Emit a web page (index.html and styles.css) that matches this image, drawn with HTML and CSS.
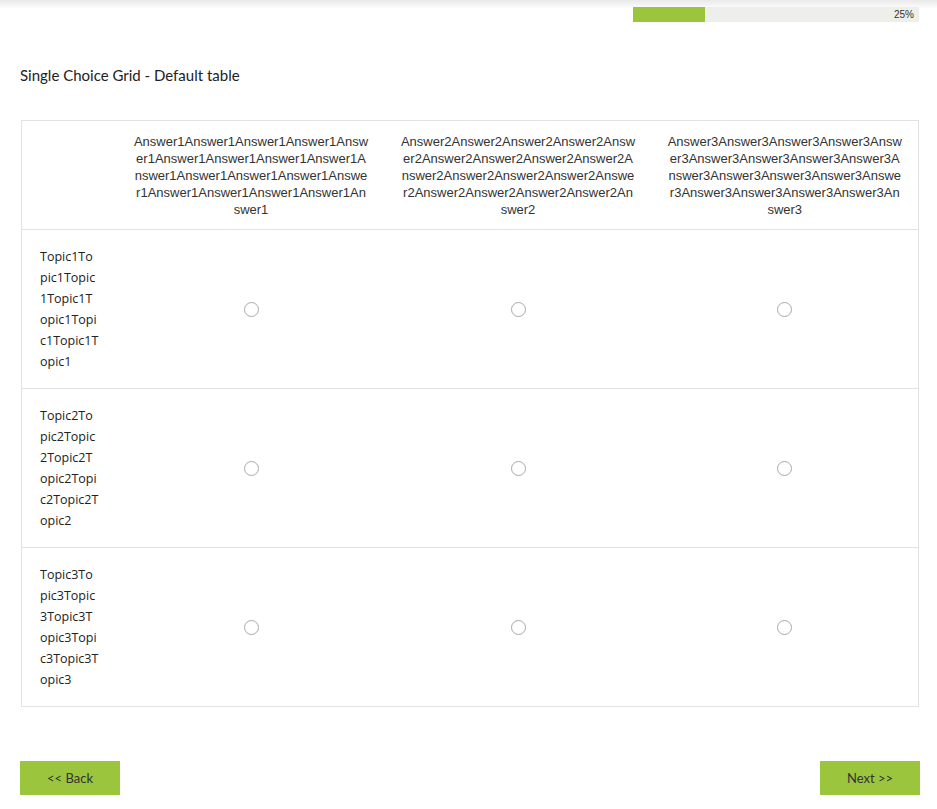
FILE: index.html
```html
<!doctype html>
<html lang="en">
  <head>
    <meta charset="UTF-8" />
    <meta name="viewport" content="width=device-width, initial-scale=1.0" />
    <title>Single Choice Grid</title>
    <link rel="stylesheet" href="styles.css">
  </head>
  <body>
    <div class="topbar">
      <div class="progress">
        <div class="progress-fill" style="width: 25%"></div>
        <span class="progress-text">25%</span>
      </div>
    </div>

    <div class="page">
      <h1 class="question-title">Single Choice Grid - Default table</h1>

      <table class="grid">
        <colgroup>
          <col class="topic-col">
          <col>
          <col>
          <col>
        </colgroup>
        <thead>
          <tr>
            <th></th>
            <th>Answer1Answer1Answer1Answer1Answer1Answer1Answer1Answer1Answer1Answer1Answer1Answer1Answer1Answer1Answer1Answer1Answer1Answer1Answer1</th>
            <th>Answer2Answer2Answer2Answer2Answer2Answer2Answer2Answer2Answer2Answer2Answer2Answer2Answer2Answer2Answer2Answer2Answer2Answer2Answer2</th>
            <th>Answer3Answer3Answer3Answer3Answer3Answer3Answer3Answer3Answer3Answer3Answer3Answer3Answer3Answer3Answer3Answer3Answer3Answer3Answer3</th>
          </tr>
        </thead>
        <tbody>
          <tr>
            <td class="topic">Topic1Topic1Topic1Topic1Topic1Topic1Topic1Topic1</td>
            <td><span class="radio"></span></td>
            <td><span class="radio"></span></td>
            <td><span class="radio"></span></td>
          </tr>
          <tr>
            <td class="topic">Topic2Topic2Topic2Topic2Topic2Topic2Topic2Topic2</td>
            <td><span class="radio"></span></td>
            <td><span class="radio"></span></td>
            <td><span class="radio"></span></td>
          </tr>
          <tr>
            <td class="topic">Topic3Topic3Topic3Topic3Topic3Topic3Topic3Topic3</td>
            <td><span class="radio"></span></td>
            <td><span class="radio"></span></td>
            <td><span class="radio"></span></td>
          </tr>
        </tbody>
      </table>

      <div class="nav">
        <button class="btn">&lt;&lt; Back</button>
        <button class="btn">Next &gt;&gt;</button>
      </div>
    </div>
  </body>
</html>
```

FILE: styles.css
```css
body {
  margin: 0;
  font-family: Lato, "Open Sans", sans-serif;
  color: #222;
  background: #fff;
}
.topbar {
  height: 23px;
  padding-top: 7px;
  box-sizing: border-box;
  background: linear-gradient(#e9e9e9, #fafafa 7px, #fff 8px);
  display: flex;
  justify-content: flex-end;
  padding-right: 18px;
}
.progress {
  position: relative;
  width: 286px;
  height: 15px;
  background-color: #eeeeea;
}
.progress-fill {
  height: 100%;
  background-color: #9bc53d;
}
.progress-text {
  position: absolute;
  right: 5px;
  top: 1px;
  font-family: "Liberation Sans", Arial, sans-serif;
  font-size: 10px;
  line-height: 13px;
  color: #333;
}
.page {
  padding: 0 17px 0 20px;
}
.question-title {
  margin: 42px 0 35px;
  font-size: 15px;
  font-weight: normal;
  line-height: 20px;
  color: #222;
}
.grid {
  width: 898px;
  margin-left: 1px;
  border-collapse: collapse;
  table-layout: fixed;
  border: 1px solid #e2e2e2;
}
.grid .topic-col {
  width: 96px;
}
.grid th {
  padding: 12px 16px 11px;
  font-family: "Liberation Sans", Arial, sans-serif;
  font-size: 13px;
  font-weight: normal;
  line-height: 17px;
  color: #333;
  text-align: center;
  word-break: break-all;
  vertical-align: middle;
}
.grid tbody tr {
  border-top: 1px solid #e2e2e2;
}
.grid td {
  height: 126px;
  padding: 16px 18px;
  text-align: center;
  vertical-align: middle;
}
.grid td.topic {
  padding: 16px 18.7px 16px 18px;
  text-align: left;
  font-family: "Open Sans", sans-serif;
  font-size: 12.5px;
  line-height: 21px;
  color: #222;
  word-break: break-all;
}
.radio {
  display: block;
  width: 13px;
  height: 13px;
  margin: 0 auto;
  border: 1px solid #a9a9a9;
  border-radius: 50%;
}
.nav {
  display: flex;
  justify-content: space-between;
  margin-top: 54px;
}
.btn {
  width: 100px;
  height: 34px;
  border: none;
  background-color: #9bc53d;
  color: #333;
  font-family: Lato, "Open Sans", sans-serif;
  font-size: 13px;
  cursor: pointer;
}
```
